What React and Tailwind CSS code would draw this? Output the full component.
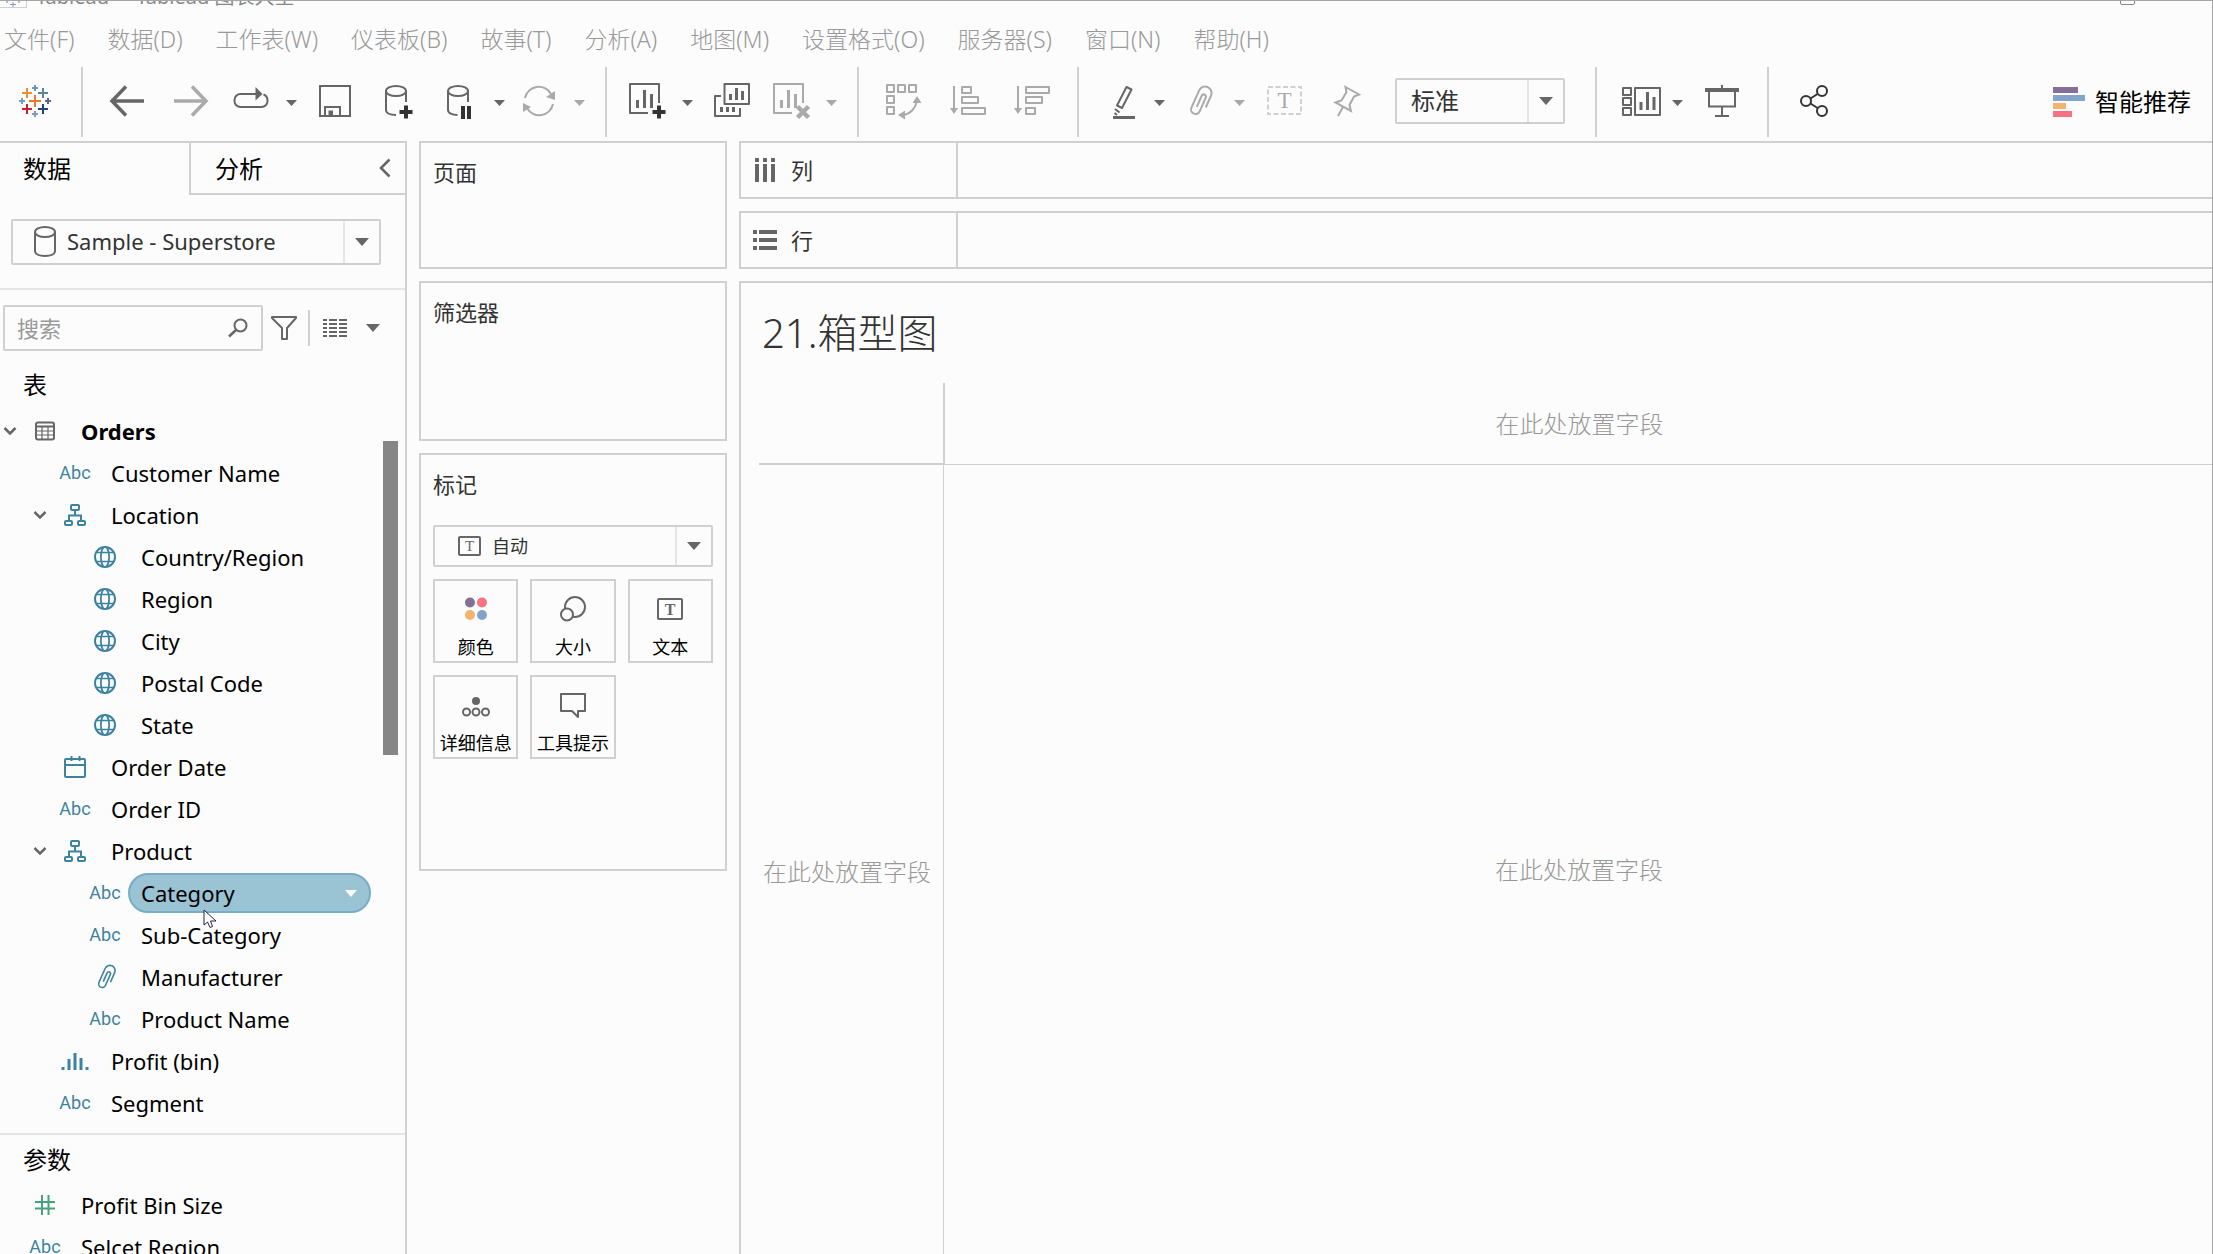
import React from "react";

const dark = "text-[#666666]";
const light = "text-[#aaaaaa]";

function Svg({ size = 40, box = 40, className = "", children }) {
  return (
    <svg
      width={size}
      height={size}
      viewBox={`0 0 ${box} ${box}`}
      fill="none"
      stroke="currentColor"
      strokeWidth="2"
      className={`shrink-0 overflow-visible ${className}`}
      aria-hidden="true"
    >
      {children}
    </svg>
  );
}

function Caret({ className = "w-[11px] h-[6px]" }) {
  return (
    <svg viewBox="0 0 12 7" preserveAspectRatio="none" className={`shrink-0 ${className}`} aria-hidden="true">
      <path d="M0 0h12L6 7z" fill="currentColor" />
    </svg>
  );
}

function LogoIcon() {
  const marks = [
    [20, 20, 6, "#eb7a2f"],
    [12, 12, 5, "#e8912d"],
    [28, 12, 5, "#5a879c"],
    [12, 28, 5, "#c72035"],
    [28, 28, 5, "#1f447e"],
    [20, 7, 3, "#6a9bb5"],
    [20, 33, 3, "#7f9bbf"],
    [7, 20, 3, "#6ca4bb"],
    [33, 20, 3, "#5c6692"],
  ];
  return (
    <Svg>
      {marks.map(([x, y, r, color]) => (
        <path key={`${x}-${y}`} d={`M${x - r} ${y}h${r * 2}M${x} ${y - r}v${r * 2}`} stroke={color} />
      ))}
    </Svg>
  );
}

function SheetIcon({ children }) {
  return (
    <Svg>
      <path d="M32 22V3H3v29h18" strokeLinejoin="round" />
      <path d="M10.500 19v8M17.500 9v18M24.500 13v14" strokeWidth="3" />
      {children}
    </Svg>
  );
}

function ClipIcon({ size = 40, className = "", strokeWidth = 2 }) {
  return (
    <Svg size={size} className={className}>
      <path
        d="M29 24V11a6.500 6.500 0 0 0-13 0v19a4.500 4.500 0 0 0 9 0V15a2.250 2.250 0 0 0-4.500 0v12"
        transform="rotate(24 22 20)"
        strokeWidth={strokeWidth}
      />
    </Svg>
  );
}

const icons = {
  back: (
    <Svg>
      <path d="M37 20H5M19 5.500L5 20l14 14.500" strokeWidth="3.500" />
    </Svg>
  ),
  forward: (
    <Svg>
      <path d="M3 20h32M21 5.500L35 20 21 34.500" strokeWidth="3.500" />
    </Svg>
  ),
  redo: (
    <Svg>
      <path d="M25 13H9.500a6 6 0 0 0-6 6v1a6 6 0 0 0 6 6h21a6 6 0 0 0 6-6v-1a6 6 0 0 0-4-5.500" />
      <path d="M24.500 6l7 7-7 6.500z" fill="currentColor" stroke="none" />
    </Svg>
  ),
  save: (
    <Svg>
      <path d="M5 5h30v30H5zM10 35V26h15v9" />
      <path d="M13.500 29.500h4.500V36h-4.500z" fill="currentColor" stroke="none" />
    </Svg>
  ),
  addData: (
    <Svg>
      <ellipse cx="17" cy="10" rx="10" ry="5" />
      <path d="M7 10v19c0 3 4 5 10 5M27 10v11" />
      <path d="M27 24.500v13M20.500 31h13" stroke="#333333" strokeWidth="4" />
    </Svg>
  ),
  pauseData: (
    <Svg>
      <ellipse cx="19" cy="10" rx="10" ry="5" />
      <path d="M9 10v19c0 3 4 5 9.500 5M29 10v11" />
      <path d="M24 25v13M30 25v13" stroke="#333333" strokeWidth="4" />
    </Svg>
  ),
  refresh: (
    <Svg>
      <path d="M6 17A14 14 0 0 1 32 13M34 23A14 14 0 0 1 8 27" />
      <path d="M36 10v9l-9-3zM4 31v-9l8 4z" fill="currentColor" stroke="none" />
    </Svg>
  ),
  newSheet: (
    <SheetIcon>
      <path d="M32 24.500v13M25.500 31h13" stroke="#333333" strokeWidth="4" />
    </SheetIcon>
  ),
  duplicate: (
    <Svg>
      <path d="M13.500 3H38v20H13.500zM10 15H4v20h25v-8" strokeLinejoin="round" />
      <path d="M19.500 13v6M25.500 7v12M31.500 10v9M10.500 26v5M16.500 26v5M22.500 26v5" strokeWidth="3" />
    </Svg>
  ),
  clearSheet: (
    <SheetIcon>
      <path d="M26.500 25.500l11 11M37.500 25.500l-11 11" strokeWidth="4.500" />
    </SheetIcon>
  ),
  swap: (
    <Svg>
      <path d="M4 4h7v7H4zM15 4h7v7h-7zM26 4h7v7h-7zM4 15h7v7H4zM4 26h7v7H4z" strokeLinejoin="round" />
      <path d="M20 34c8-1 13-8 13.500-13" />
      <path d="M34 15l4.500 7h-9zM15 34l7-4.500v9z" fill="currentColor" stroke="none" />
    </Svg>
  ),
  sortAsc: (
    <Svg>
      <path d="M7 5v23M15 6h9v6h-9zM15 16h16v6H15zM15 27h23v6H15z" strokeLinejoin="round" />
      <path d="M3 27h8l-4 6z" fill="currentColor" stroke="none" />
    </Svg>
  ),
  sortDesc: (
    <Svg>
      <path d="M7 5v23M15 6h23v6H15zM15 16h16v6H15zM15 27h9v6h-9z" strokeLinejoin="round" />
      <path d="M3 27h8l-4 6z" fill="currentColor" stroke="none" />
    </Svg>
  ),
  highlight: (
    <Svg>
      <path d="M27.500 6l5 2.500L23 27l-5-2.500zM16 28l4.500 3.500M15.500 32l2.500 2" strokeLinejoin="round" />
      <path d="M14 36.500h22" strokeWidth="3" />
    </Svg>
  ),
  clip: <ClipIcon />,
  label: (
    <Svg>
      <rect x="5" y="6" width="33" height="27" strokeDasharray="5 2.500" stroke="#d0d0d0" />
      <text x="21.500" y="27" textAnchor="middle" fontSize="23" fontFamily="Liberation Serif, serif" fill="currentColor" stroke="none">
        T
      </text>
    </Svg>
  ),
  pin: (
    <Svg>
      <path d="M18.500 6L32 13.500l-5 2-4.500 8.500 1.500 6L8.500 21.500l6-2 5-8.500zM16 26l-5 9" />
    </Svg>
  ),
  cards: (
    <Svg>
      <path d="M6 7h8v7H6zM6 17h8v7H6zM6 27h8v7H6zM18 7h25v27H18z" strokeLinejoin="round" />
      <path d="M24 21v8M30.500 11v18M37 16v13" strokeWidth="3" />
    </Svg>
  ),
  present: (
    <Svg>
      <path d="M8 11v14.500h26V11M21 4v4M21 26v9M14 35h14" />
      <path d="M4 9h34" strokeWidth="4" />
    </Svg>
  ),
  share: (
    <Svg className="text-[#333333]">
      <circle cx="13" cy="20" r="5" />
      <circle cx="29" cy="10" r="5" />
      <circle cx="29" cy="30" r="5" />
      <path d="M17.500 17.500l7-4.500M17.500 22.500l7 4.500" />
    </Svg>
  ),
};

const menus = [
  "文件(F)",
  "数据(D)",
  "工作表(W)",
  "仪表板(B)",
  "故事(T)",
  "分析(A)",
  "地图(M)",
  "设置格式(O)",
  "服务器(S)",
  "窗口(N)",
  "帮助(H)",
];

function TitleStrip() {
  return (
    <div className="flex h-[7px] shrink-0 items-end overflow-hidden text-[#888888]">
      <span className="flex h-10 w-[27px] items-end justify-center border-r border-b border-[#d0d0d0]">
        <svg width="20" height="6" viewBox="0 0 20 6" fill="none" strokeWidth="1" aria-hidden="true">
          <path d="M7 3.500h6M10 1v5" stroke="#7f9bbf" />
          <path d="M4 0v2M16 0v2" stroke="#5a879c" />
        </svg>
      </span>
      <span className="pb-px pl-[9px] text-xl leading-5 whitespace-pre">Tableau  -  Tableau 图表大全</span>
      <span className="mb-[3px] ml-auto mr-[77px] h-4 w-[15px] rounded-xs border border-[#888888]" />
    </div>
  );
}

function Tool({ icon, label, menu, disabled }) {
  return (
    <div className={`flex items-center ${disabled ? light : dark}`}>
      <button
        type="button"
        aria-label={label}
        disabled={disabled}
        className={`flex h-12 items-center justify-center ${menu ? "w-14" : "w-16"}`}
      >
        {icons[icon]}
      </button>
      {menu && (
        <button type="button" aria-label={`${label}选项`} disabled={disabled} className="flex h-12 w-6 items-center justify-center pt-1">
          <Caret />
        </button>
      )}
    </div>
  );
}

function ToolGroup({ children, className = "pr-[14px]" }) {
  return <div className={`flex items-center border-r-2 border-[#d0d0d0] pb-0.5 pl-3 ${className}`}>{children}</div>;
}

function Toolbar() {
  return (
    <div className="mb-1 flex h-[70px] shrink-0">
      <div className="flex w-[83px] items-center border-r-2 border-[#d0d0d0] pb-0.5 pl-[15px]">
        <button type="button" aria-label="起始页">
          <LogoIcon />
        </button>
      </div>
      <ToolGroup>
        <Tool icon="back" label="撤消" />
        <Tool icon="forward" label="重做" disabled />
        <Tool icon="redo" label="重播" menu />
        <Tool icon="save" label="保存" />
        <Tool icon="addData" label="新建数据源" />
        <Tool icon="pauseData" label="暂停自动更新" menu />
        <Tool icon="refresh" label="运行更新" menu disabled />
      </ToolGroup>
      <ToolGroup>
        <Tool icon="newSheet" label="新建工作表" menu />
        <Tool icon="duplicate" label="复制" />
        <Tool icon="clearSheet" label="清除工作表" menu disabled />
      </ToolGroup>
      <ToolGroup>
        <Tool icon="swap" label="交换行和列" disabled />
        <Tool icon="sortAsc" label="升序排序" disabled />
        <Tool icon="sortDesc" label="降序排序" disabled />
      </ToolGroup>
      <ToolGroup className="pr-[30px]">
        <Tool icon="highlight" label="突出显示" menu />
        <Tool icon="clip" label="组成员" menu disabled />
        <Tool icon="label" label="显示标记标签" disabled />
        <Tool icon="pin" label="固定轴" disabled />
        <div className="ml-4 flex h-[46px] w-[170px] items-stretch rounded-xs border-2 border-[#d0d0d0] text-[#333333]">
          <select aria-label="适合" className="min-w-0 flex-1 appearance-none pl-[14px] text-2xl outline-none">
            <option>标准</option>
          </select>
          <span className="flex w-9 items-center justify-center border-l-2 border-[#e5e5e5] text-[#666666]">
            <Caret className="h-2 w-[14px]" />
          </span>
        </div>
      </ToolGroup>
      <ToolGroup>
        <Tool icon="cards" label="显示/隐藏卡" menu />
        <Tool icon="present" label="演示模式" />
      </ToolGroup>
      <div className="flex items-center pb-0.5 pl-3">
        <Tool icon="share" label="共享工作簿" />
      </div>
      <button type="button" className="ml-auto flex items-center gap-[10px] pr-[21px] text-2xl text-black">
        <svg width="32" height="30" viewBox="0 0 32 30" aria-hidden="true">
          <path d="M0 0h25v6H0z" fill="#866f97" />
          <path d="M0 8h32v6H0z" fill="#82a4cb" />
          <path d="M0 16h13v6H0z" fill="#f6b26f" />
          <path d="M0 24h19v6H0z" fill="#f87282" />
        </svg>
        智能推荐
      </button>
    </div>
  );
}

const Abc = () => <span className="font-['Roboto',sans-serif] text-lg">Abc</span>;

const fieldIcons = {
  abc: <Abc />,
  table: (
    <Svg size={20} box={20} className={dark}>
      <rect x="1" y="1.500" width="18" height="17" rx="2" />
      <path d="M1 5.500h18" />
      <path d="M1 10h18M1 14h18M7 6v12M13 6v12" strokeWidth="1.200" />
    </Svg>
  ),
  hierarchy: (
    <Svg size={22} box={22}>
      <rect x="7" y="1" width="8" height="5" rx="1" />
      <rect x="1" y="17" width="7" height="4" rx="1" />
      <rect x="14" y="17" width="7" height="4" rx="1" />
      <path d="M11 6v5.500M5 17v-5.500h12V17" />
    </Svg>
  ),
  globe: (
    <Svg size={22} box={22}>
      <circle cx="11" cy="11" r="10" />
      <path d="M2.500 6.500h17M2.500 15.500h17M9.500 1C6 6 6 16 9.500 21M12.500 1c3.500 5 3.500 15 0 20" strokeWidth="1.700" />
    </Svg>
  ),
  date: (
    <Svg size={22} box={22}>
      <rect x="1" y="3" width="20" height="18" rx="1" />
      <path d="M1 9h20M7.500 0v5M15.500 0v5" />
    </Svg>
  ),
  clip: <ClipIcon size={32} className="-mx-1" />,
  bin: (
    <Svg size={28} box={28}>
      <path d="M2 20v3M8 12v11M14 6v17M20 11v12M26 20v3" strokeWidth="3" strokeLinecap="butt" />
    </Svg>
  ),
  number: (
    <Svg size={20} box={20} className="text-[#45a27d]">
      <path d="M0 7h20M0 13.500h20M7 0v20M13.500 0v20" />
    </Svg>
  ),
};

const fields = [
  { name: "Orders", icon: "table", depth: 0, open: true, bold: true },
  { name: "Customer Name", icon: "abc", depth: 1 },
  { name: "Location", icon: "hierarchy", depth: 1, open: true },
  { name: "Country/Region", icon: "globe", depth: 2 },
  { name: "Region", icon: "globe", depth: 2 },
  { name: "City", icon: "globe", depth: 2 },
  { name: "Postal Code", icon: "globe", depth: 2 },
  { name: "State", icon: "globe", depth: 2 },
  { name: "Order Date", icon: "date", depth: 1 },
  { name: "Order ID", icon: "abc", depth: 1 },
  { name: "Product", icon: "hierarchy", depth: 1, open: true },
  { name: "Category", icon: "abc", depth: 2, selected: true },
  { name: "Sub-Category", icon: "abc", depth: 2 },
  { name: "Manufacturer", icon: "clip", depth: 2 },
  { name: "Product Name", icon: "abc", depth: 2 },
  { name: "Profit (bin)", icon: "bin", depth: 1 },
  { name: "Segment", icon: "abc", depth: 1 },
];

const params = [
  { name: "Profit Bin Size", icon: "number", depth: 0 },
  { name: "Selcet Region", icon: "abc", depth: 0 },
];

const indent = ["pl-0", "pl-[30px]", "pl-[60px]"];

function Pointer() {
  return (
    <svg width="14" height="20" viewBox="0 0 14 20" className="absolute top-[34px] left-[73px] z-10" aria-hidden="true">
      <path d="M1 1v15l3.500-3 2.500 5.500 2.500-1-2-5.500H13z" fill="#ffffff" stroke="#222244" strokeWidth="1" />
    </svg>
  );
}

function Field({ field }) {
  return (
    <li className={`flex h-[42px] items-center ${indent[field.depth]}`}>
      <span className={`flex w-5 justify-center ${dark}`}>
        {field.open && (
          <Svg size={14} box={14}>
            <path d="M1.500 4L7 9.500 12.500 4" strokeWidth="2.500" />
          </Svg>
        )}
      </span>
      <span className="flex w-12 items-center justify-center pl-0.5 text-[#3d83a0]">{fieldIcons[field.icon]}</span>
      <button
        type="button"
        className={`relative flex h-10 flex-1 items-center justify-between rounded-full border-2 pl-[11px] pr-3 text-left whitespace-nowrap ${
          field.selected ? "border-[#77adc7] bg-[#9ac3d4]" : "border-transparent"
        } ${field.bold ? "font-bold" : ""}`}
      >
        {field.name}
        {field.selected && <Caret className="h-[7px] w-3 text-white" />}
        {field.selected && <Pointer />}
      </button>
    </li>
  );
}

function DataPane() {
  return (
    <aside className="flex w-[407px] shrink-0 flex-col border-t-2 border-r-2 border-[#d0d0d0] text-[22px] text-black *:shrink-0">
      <div className="flex h-[52px] text-2xl">
        <button type="button" className="w-[189px] pl-[23px] text-left">
          数据
        </button>
        <div className="flex flex-1 items-center border-b-2 border-l-2 border-[#d0d0d0] pr-[14px] pl-6">
          <button type="button" className="flex-1 pt-0.5 text-left">
            分析
          </button>
          <button type="button" aria-label="折叠" className={dark}>
            <svg width="13" height="20" viewBox="0 0 13 20" fill="none" stroke="currentColor" strokeWidth="2.500">
              <path d="M11.500 1.500L3 10l8.500 8.500" />
            </svg>
          </button>
        </div>
      </div>

      <div className="flex h-[95px] items-center border-b-2 border-[#e5e5e5] pl-[11px]">
        <div className="flex h-[46px] w-[370px] items-stretch rounded-xs border-2 border-[#d0d0d0] text-[#333333]">
          <span className={`flex w-11 items-center justify-end ${dark}`}>
            <svg width="24" height="32" viewBox="0 0 24 32" fill="none" stroke="currentColor" strokeWidth="2">
              <ellipse cx="12" cy="6" rx="10" ry="5" />
              <path d="M2 6v19c0 3 4 5 10 5s10-2 10-5V6" />
            </svg>
          </span>
          <select aria-label="数据源" className="min-w-0 flex-1 appearance-none pl-[10px] outline-none">
            <option>Sample - Superstore</option>
          </select>
          <span className={`flex w-9 items-center justify-center border-l-2 border-[#e5e5e5] ${dark}`}>
            <Caret className="h-2 w-[14px]" />
          </span>
        </div>
      </div>

      <div className={`mt-[15px] flex h-[46px] items-center pl-[3px] ${dark}`}>
        <label className="flex h-full w-[260px] items-center rounded-xs border-2 border-[#d0d0d0] pr-[13px] pl-3">
          <input
            type="text"
            aria-label="搜索"
            placeholder="搜索"
            className="min-w-0 flex-1 outline-none placeholder:text-[#999999]"
          />
          <Svg size={20} box={20}>
            <circle cx="12.500" cy="7.500" r="6" />
            <path d="M8 12l-7 6.500" strokeWidth="2.500" />
          </Svg>
        </label>
        <button type="button" aria-label="筛选字段" className="ml-2">
          <Svg size={26} box={26}>
            <path d="M1 2h24v1l-9 10v11h-5V13L1 3z" strokeLinejoin="round" />
          </Svg>
        </button>
        <button type="button" aria-label="查看" className="ml-[11px] flex h-9 items-center gap-[19px] border-l-2 border-[#d0d0d0] pl-[13px]">
          <Svg size={24} box={24}>
            <path d="M0 4h24M0 8h24M0 12h24M0 16h24M0 20h24" strokeDasharray="4 2 8 2 8 0" />
          </Svg>
          <Caret className="h-2 w-[14px]" />
        </button>
      </div>

      <h2 className="flex h-[59px] items-center pt-2 pl-[23px] text-2xl">表</h2>
      <div className="flex gap-3">
        <ul className="w-[371px]">
          {fields.map((field) => (
            <Field key={field.name} field={field} />
          ))}
        </ul>
        <div className="w-[15px] pt-[31px]">
          <div className="h-[314px] bg-[#868686]" />
        </div>
      </div>

      <h2 className="mt-[9px] flex h-[51px] items-center border-t-2 border-[#e5e5e5] pl-[23px] text-2xl">参数</h2>
      <ul className="w-[371px]">
        {params.map((field) => (
          <Field key={field.name} field={field} />
        ))}
      </ul>
    </aside>
  );
}

const markIcons = {
  color: (
    <Svg size={26} box={26}>
      <g stroke="none">
        <circle cx="7" cy="6.500" r="5" fill="#866f97" />
        <circle cx="19" cy="6.500" r="5" fill="#f87282" />
        <circle cx="7" cy="19" r="5" fill="#f6b26f" />
        <circle cx="19" cy="19" r="5" fill="#82a4cb" />
      </g>
    </Svg>
  ),
  size: (
    <Svg size={26} box={26}>
      <circle cx="15" cy="11" r="10" />
      <circle cx="7" cy="18.500" r="6" fill="#fcfcfc" />
    </Svg>
  ),
  text: (
    <Svg size={26} box={26}>
      <rect x="1" y="3" width="24" height="20" rx="1" />
      <text x="13" y="18.500" textAnchor="middle" fontSize="16" fontWeight="bold" fontFamily="Liberation Serif, serif" fill="currentColor" stroke="none">
        T
      </text>
    </Svg>
  ),
  detail: (
    <Svg size={28} box={28}>
      <circle cx="14" cy="9" r="4" fill="currentColor" stroke="none" />
      <circle cx="4.500" cy="20" r="3.500" />
      <circle cx="14" cy="20" r="3.500" />
      <circle cx="23.500" cy="20" r="3.500" />
    </Svg>
  ),
  tooltip: (
    <Svg size={26} box={26}>
      <path d="M1 2h24v17h-7v6l-6-6H1z" strokeLinejoin="round" />
    </Svg>
  ),
};

const marks = [
  { icon: "color", label: "颜色" },
  { icon: "size", label: "大小" },
  { icon: "text", label: "文本" },
  { icon: "detail", label: "详细信息" },
  { icon: "tooltip", label: "工具提示" },
];

function Card({ title, className, children }) {
  return (
    <section className={`border-2 border-[#d0d0d0] px-3 pt-[13px] ${className}`}>
      <h2 className="text-[22px] leading-8">{title}</h2>
      {children}
    </section>
  );
}

function Cards() {
  return (
    <div className="flex w-[308px] shrink-0 flex-col gap-3">
      <Card title="页面" className="h-[128px]" />
      <Card title="筛选器" className="h-[160px]" />
      <Card title="标记" className="h-[418px]">
        <div className="mt-[25px] flex h-[42px] items-stretch rounded-xs border-2 border-[#d0d0d0]">
          <span className={`flex w-[46px] items-center justify-end ${dark}`}>
            <svg width="23" height="20" viewBox="0 0 23 20" fill="none" stroke="currentColor" strokeWidth="2">
              <rect x="1" y="1" width="21" height="18" rx="1" />
              <text x="11.500" y="15" textAnchor="middle" fontSize="15" fontFamily="Liberation Serif, serif" fill="currentColor" stroke="none">
                T
              </text>
            </svg>
          </span>
          <select aria-label="标记类型" className="min-w-0 flex-1 appearance-none pl-[11px] text-lg outline-none">
            <option>自动</option>
          </select>
          <span className={`flex w-9 items-center justify-center border-l-2 border-[#e5e5e5] ${dark}`}>
            <Caret className="h-2 w-[14px]" />
          </span>
        </div>
        <div className="mt-3 grid grid-cols-3 gap-3">
          {marks.map((mark) => (
            <button
              key={mark.label}
              type="button"
              className="flex h-[84px] flex-col items-center justify-between border-2 border-[#d0d0d0] pt-[15px] text-lg leading-7 whitespace-nowrap text-black"
            >
              <span className={dark}>{markIcons[mark.icon]}</span>
              {mark.label}
            </button>
          ))}
        </div>
      </Card>
    </div>
  );
}

function Shelf({ label, children }) {
  return (
    <div className="flex h-[58px] border-2 border-r-0 border-[#d0d0d0]">
      <div className="flex w-[217px] items-center gap-[14px] border-r-2 border-[#d0d0d0] pl-3 text-[22px]">
        <Svg size={24} box={24} className={dark}>
          {children}
        </Svg>
        {label}
      </div>
    </div>
  );
}

function Worksheet() {
  const hint = "在此处放置字段";
  return (
    <main className="flex min-w-0 flex-1 flex-col gap-3">
      <Shelf label="列">
        <path d="M4 0v4M12 0v4M20 0v4M4 6v18M12 6v18M20 6v18" strokeWidth="4" />
      </Shelf>
      <Shelf label="行">
        <path d="M0 4h4M0 12h4M0 20h4M6 4h18M6 12h18M6 20h18" strokeWidth="4" />
      </Shelf>
      <section className="flex flex-1 flex-col border-t-2 border-l-2 border-[#d0d0d0]">
        <h1 className="flex h-[100px] items-center pl-[21px] text-[40px] font-light">21.箱型图</h1>
        <div className="flex flex-1 flex-col pl-[18px] text-2xl font-light text-[#999999]">
          <div className="flex h-[82px]">
            <div className="w-[186px] border-r-2 border-b-2 border-[#d0d0d0]" />
            <div className="flex flex-1 items-center justify-center border-b border-[#d0d0d0] pl-0.5">{hint}</div>
          </div>
          <div className="flex flex-1">
            <div className="flex w-[185px] items-center border-r border-[#d0d0d0] pt-6 pl-1 whitespace-nowrap">{hint}</div>
            <div className="flex flex-1 items-center justify-center pt-5 pl-0.5">{hint}</div>
          </div>
        </div>
      </section>
    </main>
  );
}

export default function App() {
  return (
    <div className="flex h-screen flex-col overflow-hidden border-t border-r border-[#a6a6a6] bg-[#fcfcfc] font-['Noto_Sans','Noto_Sans_CJK_SC',sans-serif] text-[#333333]">
      <TitleStrip />
      <nav className="flex h-[59px] shrink-0 items-center gap-[33px] pt-1 pl-1 text-[23px] font-light text-[#999999]">
        {menus.map((item) => (
          <button key={item} type="button" className="whitespace-nowrap">
            {item}
          </button>
        ))}
      </nav>
      <Toolbar />
      <div className="flex min-h-0 flex-1 gap-3">
        <DataPane />
        <Cards />
        <Worksheet />
      </div>
    </div>
  );
}
